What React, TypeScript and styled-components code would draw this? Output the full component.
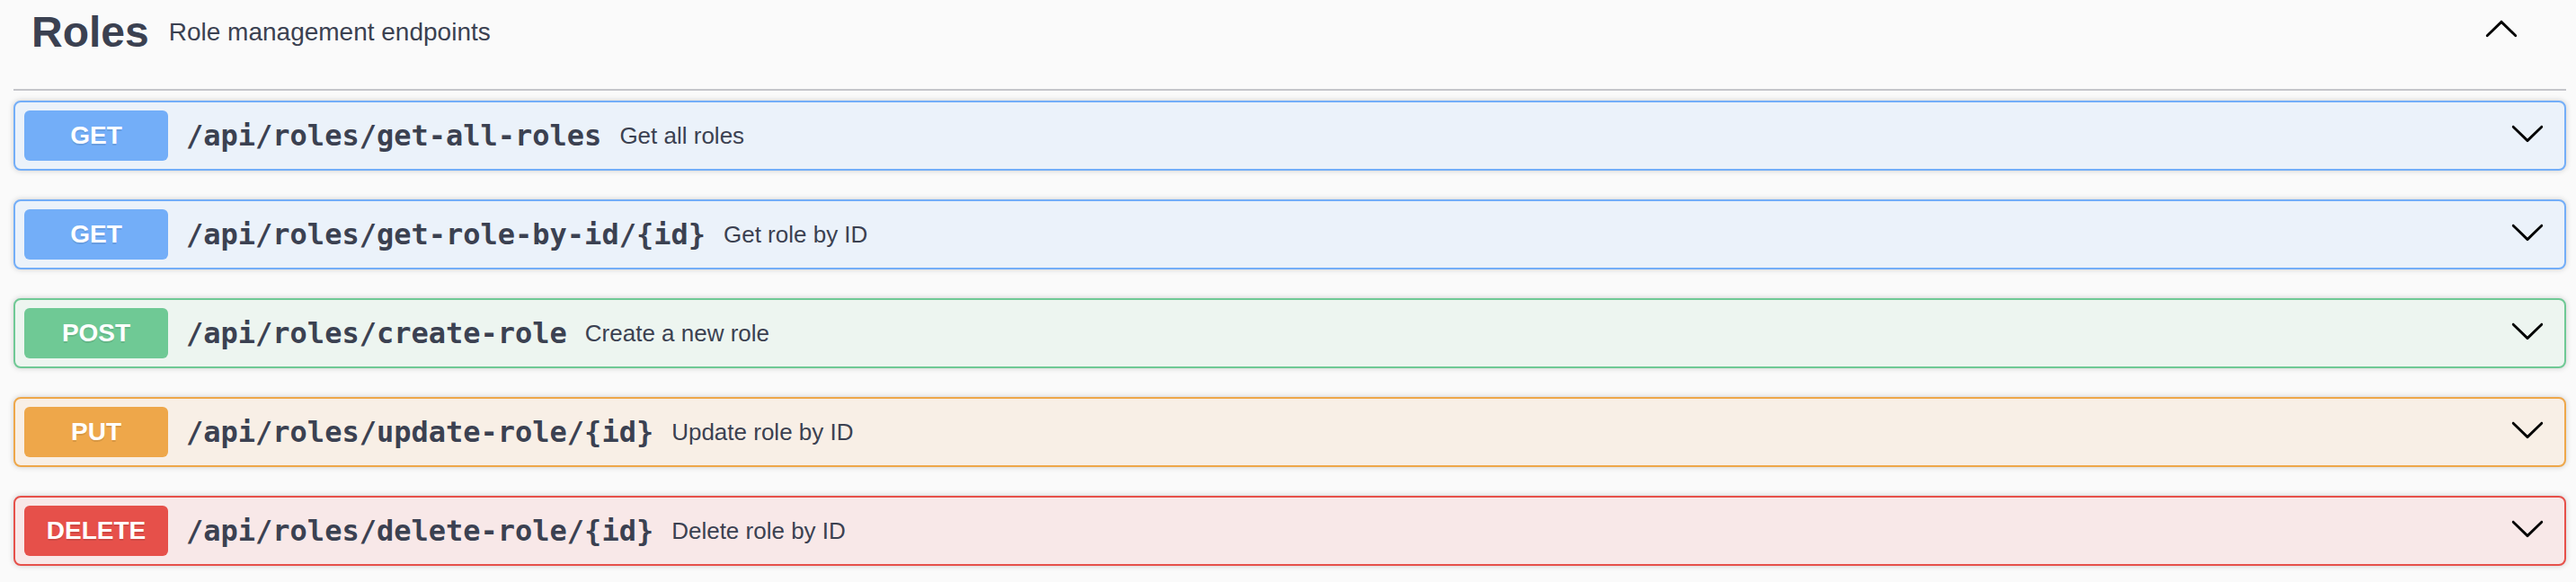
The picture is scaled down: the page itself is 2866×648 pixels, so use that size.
import React from "react";
import styled, { createGlobalStyle } from "styled-components";

const Global = createGlobalStyle`
  html, body { margin: 0; padding: 0; background: #fafafa; }
  body { font-family: "Liberation Sans", Arial, Helvetica, sans-serif; color: #3b4151; }
`;

type Method = "GET" | "POST" | "PUT" | "DELETE";

const palette: Record<Method, { main: string; bg: string }> = {
  GET: { main: "#73aef8", bg: "#ebf2fa" },
  POST: { main: "#6fc995", bg: "#edf5f0" },
  PUT: { main: "#eea74a", bg: "#f8efe6" },
  DELETE: { main: "#e6504a", bg: "#f8e8e8" },
};

const Page = styled.div`
  background: #fafafa;
  padding: 0 11px 0 15px;
  height: 648px;
  box-sizing: border-box;
`;

const TagHeader = styled.div`
  display: flex;
  align-items: center;
  padding: 9px 52px 36px 20px;
  border-bottom: 2px solid #c4c5ca;
  margin-bottom: 11px;
`;

const TagName = styled.span`
  font-size: 48px;
  line-height: 54px;
  font-weight: 700;
  color: #3b4151;
`;

const TagDesc = styled.small`
  flex: 1;
  font-size: 28px;
  line-height: 32px;
  padding: 0 22px;
  color: #3b4151;
`;

const IconButton = styled.button`
  border: none;
  background: none;
  padding: 0;
  margin: 0 0 7px 0;
  width: 40px;
  height: 40px;
  display: flex;
  cursor: pointer;
`;

const Block = styled.div<{ $method: Method }>`
  display: flex;
  align-items: center;
  height: 78px;
  box-sizing: border-box;
  padding: 0 0 0 10px;
  margin-bottom: 32px;
  border: 2px solid ${(p) => palette[p.$method].main};
  background: ${(p) => palette[p.$method].bg};
  border-radius: 8px;
  box-shadow: 0 0 6px rgba(0, 0, 0, 0.19);
`;

const Badge = styled.span<{ $method: Method }>`
  width: 160px;
  height: 56px;
  flex: none;
  display: flex;
  align-items: center;
  justify-content: center;
  border-radius: 6px;
  background: ${(p) => palette[p.$method].main};
  color: #fff;
  font-family: "Liberation Sans", Arial, sans-serif;
  font-weight: 700;
  font-size: 28px;
  text-shadow: 0 2px 0 rgba(0, 0, 0, 0.1);
`;

const Path = styled.span`
  font-family: "DejaVu Sans Mono", monospace;
  font-weight: 700;
  font-size: 32px;
  color: #3b4151;
  padding: 0 20px;
  white-space: nowrap;
`;

const Summary = styled.span`
  flex: 1;
  font-size: 26px;
  color: #3b4151;
`;

const ArrowWrap = styled.span`
  display: flex;
  padding: 0 21px 0 20px;
  margin-top: -6px;
`;

const Chevron = ({ up }: { up?: boolean }) => (
  <svg
    width="40"
    height="40"
    viewBox="0 0 20 20"
    style={up ? { transform: "rotate(180deg)" } : undefined}
  >
    <path
      fill="#000"
      d="M17.418 6.109c.272-.268.709-.268.979 0s.271.701 0 .969l-7.908 7.83c-.27.268-.707.268-.979 0l-7.908-7.83c-.27-.268-.27-.701 0-.969.271-.268.709-.268.979 0L10 13.25l7.418-7.141z"
    />
  </svg>
);

const ops: { method: Method; path: string; summary: string }[] = [
  { method: "GET", path: "/api/roles/get-all-roles", summary: "Get all roles" },
  { method: "GET", path: "/api/roles/get-role-by-id/{id}", summary: "Get role by ID" },
  { method: "POST", path: "/api/roles/create-role", summary: "Create a new role" },
  { method: "PUT", path: "/api/roles/update-role/{id}", summary: "Update role by ID" },
  { method: "DELETE", path: "/api/roles/delete-role/{id}", summary: "Delete role by ID" },
];

export default function App() {
  return (
    <>
      <Global />
      <Page>
        <TagHeader>
          <TagName>Roles</TagName>
          <TagDesc>Role management endpoints</TagDesc>
          <IconButton aria-label="collapse">
            <Chevron up />
          </IconButton>
        </TagHeader>
        {ops.map((op) => (
          <Block key={op.path} $method={op.method}>
            <Badge $method={op.method}>{op.method}</Badge>
            <Path>{op.path}</Path>
            <Summary>{op.summary}</Summary>
            <ArrowWrap>
              <Chevron />
            </ArrowWrap>
          </Block>
        ))}
      </Page>
    </>
  );
}
